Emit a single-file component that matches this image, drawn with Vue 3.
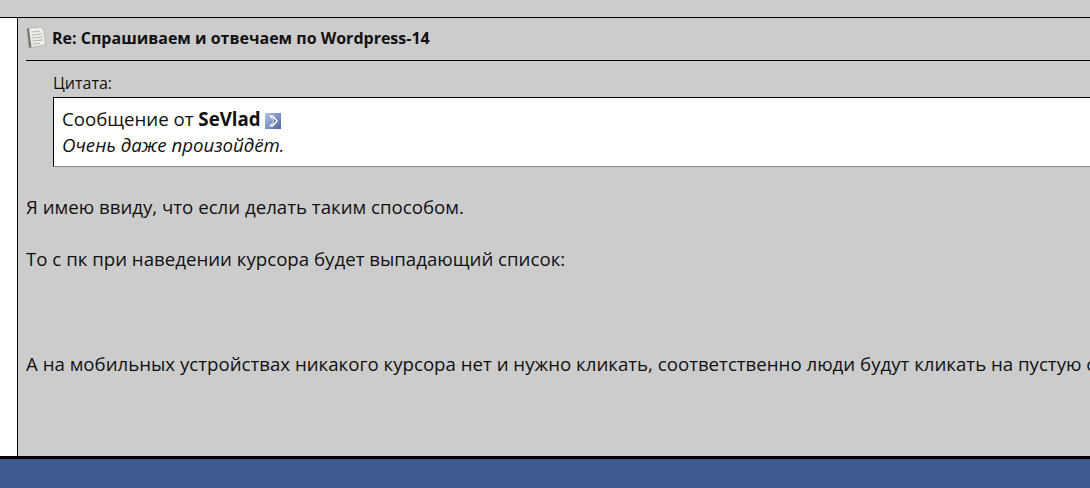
<script setup>
</script>

<template>
  <div class="page">
    <div class="top"></div>
    <div class="main">
      <div class="side"></div>
      <div class="post">
        <div class="title">
          <svg class="doc" width="20" height="23" viewBox="0 0 20 23">
            <path d="M1 2.5 L14 1 L18 3.5 L19.5 19 L5 21.5 L3 21 Z" fill="#eeede7" stroke="#b0b0a8" stroke-width="0.8"/>
            <path d="M1 2.5 L3 21.5 L5.5 21.5 L3 2.3 Z" fill="#77776f"/>
            <path d="M5.5 6 L14 5 M6 9 L16 8 M6 12 L16.5 11 M6.5 15 L17 14 M7 18 L14 17.2" stroke="#b3b7b3" stroke-width="1"/>
          </svg>
          <span>Re: Спрашиваем и отвечаем по Wordpress-14</span>
        </div>
        <div class="quote">
          <div class="qlabel">Цитата:</div>
          <div class="qbox">
            <div class="qhead">Сообщение от <b>SeVlad</b>
              <svg class="arrow" width="16" height="16" viewBox="0 0 16 16">
                <defs>
                  <linearGradient id="bg" x1="0" y1="0" x2="1" y2="1">
                    <stop offset="0" stop-color="#b4c4e6"/>
                    <stop offset="1" stop-color="#4a66a8"/>
                  </linearGradient>
                </defs>
                <rect x="0" y="0" width="16" height="16" fill="url(#bg)"/>
                <path d="M4 2.5 L8 2.5 L13 8 L8 13.5 L4 13.5 L8.5 8 Z" fill="#fff"/>
                <path d="M6 3.5 L11 8 L6 12.5 L9.5 8 Z" fill="#1f3a80"/>
              </svg>
            </div>
            <div class="qtext">Очень даже произойдёт.</div>
          </div>
        </div>
        <div class="body">
          <p>Я имею ввиду, что если делать таким способом.</p>
          <p>То с пк при наведении курсора будет выпадающий список:</p>
          <p class="gap">А на мобильных устройствах никакого курсора нет и нужно кликать, соответственно люди будут кликать на пустую ссылку</p>
        </div>
      </div>
    </div>
    <div class="foot"></div>
  </div>
</template>

<style>
html, body { margin: 0; overflow: hidden; }
</style>

<style scoped>
.page {
  width: 1090px;
  height: 488px;
  display: flex;
  flex-direction: column;
  overflow: hidden;
  font-family: "Open Sans", sans-serif;
  color: #111;
  background: #fff;
}
.top {
  height: 17px;
  flex: none;
  background: #ccc;
  border-bottom: 1px solid #000;
}
.main {
  flex: 1;
  display: flex;
  min-height: 0;
}
.side {
  width: 17px;
  flex: none;
  background: #fff;
}
.post {
  flex: 1;
  min-width: 0;
  background: #ccc;
  border-left: 1px solid #000;
  padding: 0 0 0 8px;
}
.title {
  border-bottom: 1px solid #000;
  display: flex;
  align-items: center;
  gap: 6px;
  padding-bottom: 3px;
  box-sizing: border-box;
  height: 43px;
  font-size: 16px;
  font-weight: 700;
  white-space: nowrap;
}
.doc { flex: none; }
.quote {
  padding: 11px 0 0 27px;
}
.qlabel {
  font-size: 16px;
  line-height: 22px;
  margin-bottom: 3px;
}
.qbox {
  background: #fff;
  border: 1px solid #000;
  border-right: none;
  border-bottom: 1px solid #8a8a8a;
  padding: 8px;
  font-size: 18.67px;
  line-height: 26px;
  box-sizing: border-box;
  height: 70px;
}
.qhead { white-space: nowrap; }
.arrow { vertical-align: -3px; margin-left: 4px; }
.qtext { font-style: italic; line-height: 25px; }
.body {
  padding-top: 27px;
  font-size: 18.67px;
  line-height: 26px;
  white-space: nowrap;
}
.body p { margin: 0 0 26px; }
.body p.gap { margin-top: 79px; }
.foot {
  height: 32px;
  flex: none;
  box-sizing: border-box;
  background: #3e5b90;
  border-top: 3px solid #000;
}
</style>
